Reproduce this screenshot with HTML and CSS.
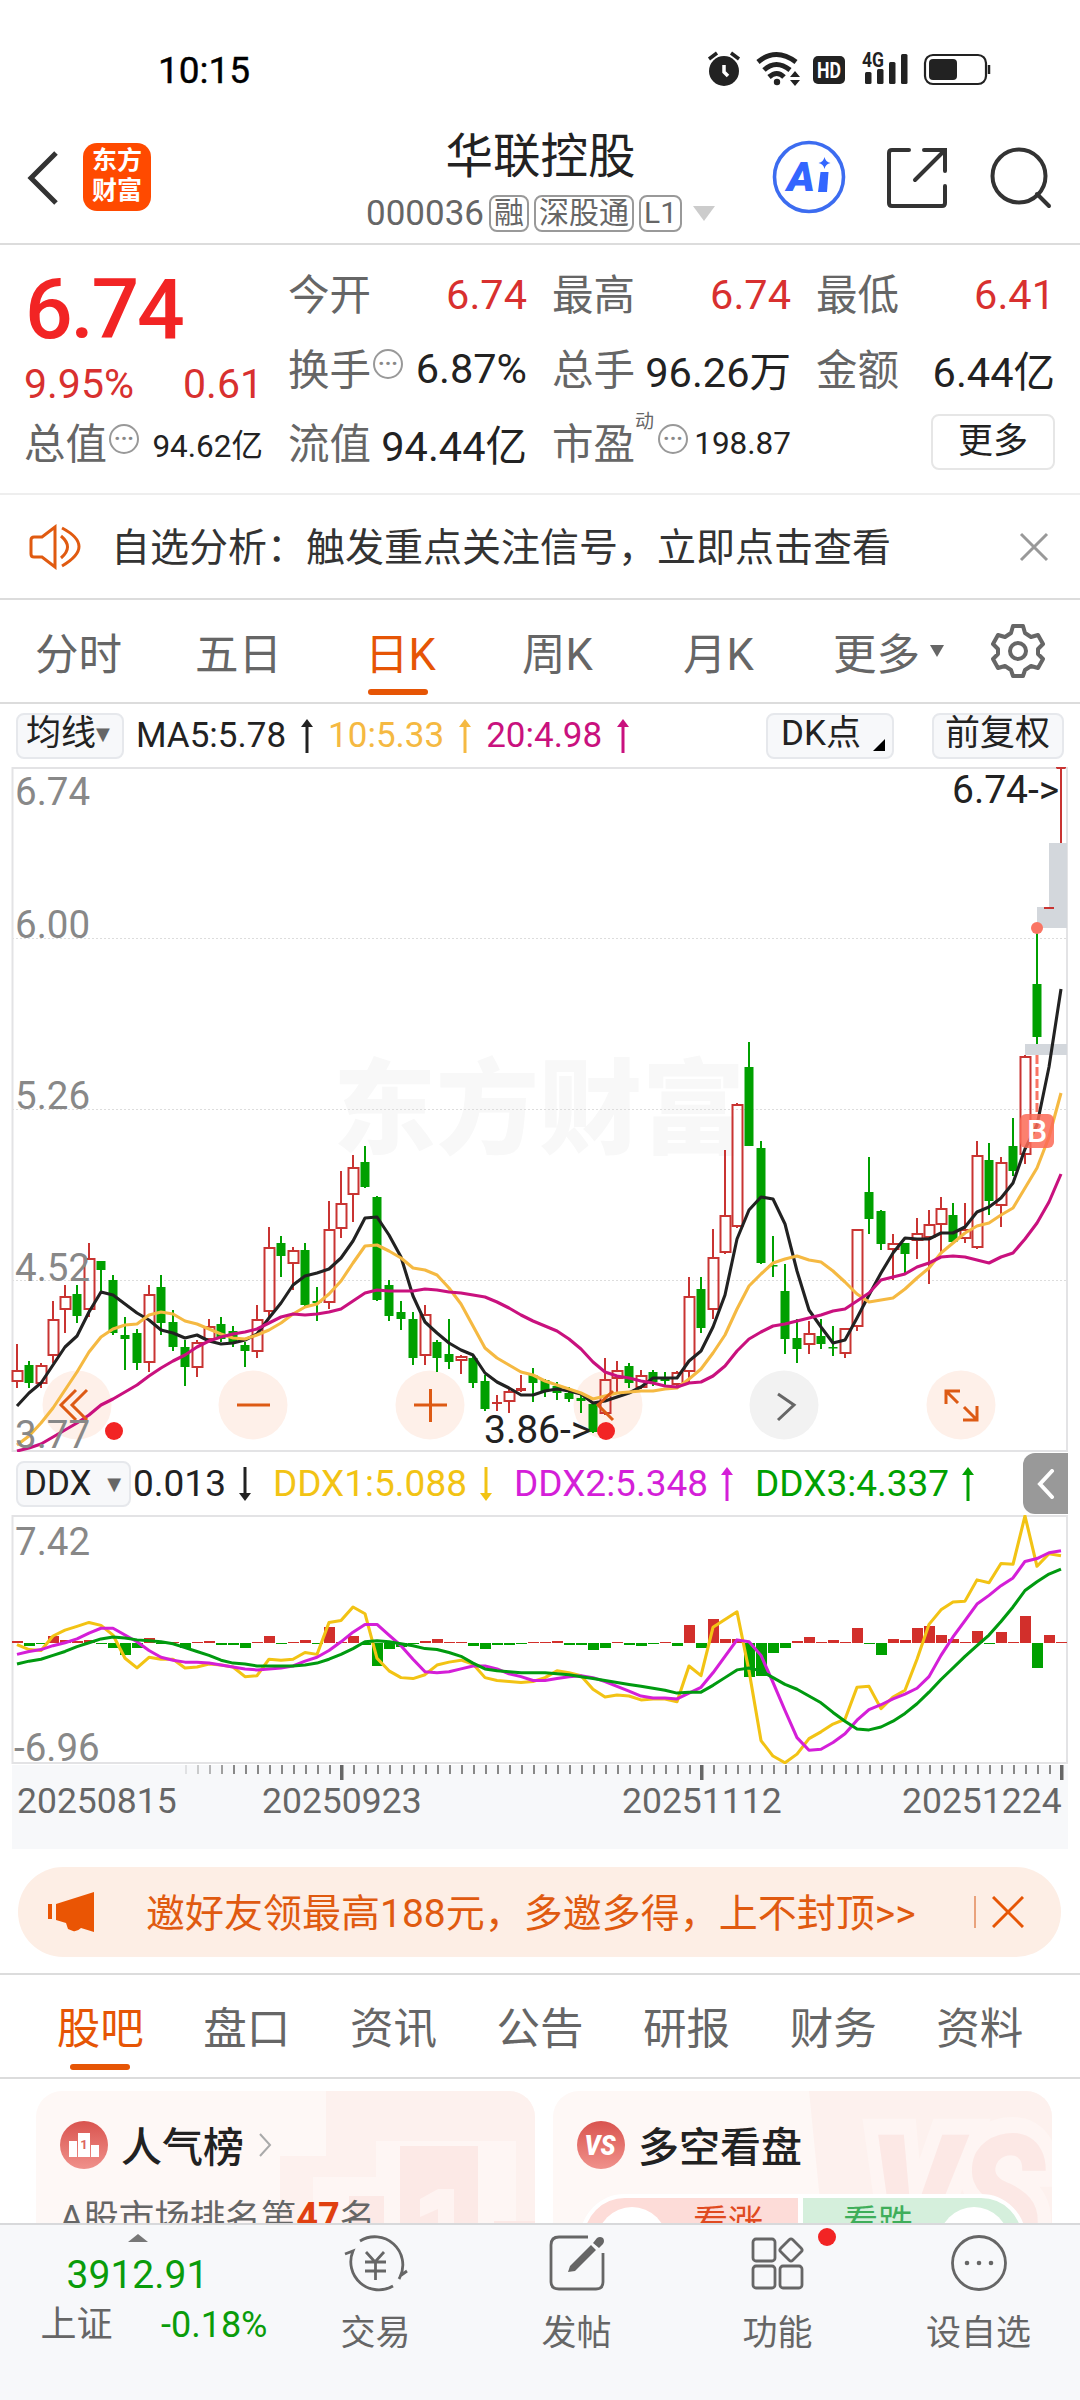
FILE: index.html
```html
<!DOCTYPE html>
<html lang="zh-CN">
<head>
  <meta charset="UTF-8">
  <title>华联控股 000036</title>
  <link rel="stylesheet" href="styles.css">
</head>
<body>
  <div class="status-bar">
    <span class="time">10:15</span>
    <svg class="status-icons" width="290" height="40" viewBox="0 0 290 40">
      <circle cx="24" cy="21" r="15"/>
      <path class="dark" d="M9 9l8-6M31 3l8 6" stroke-width="3.5"/>
      <path class="white" d="M24 15v7l4 4" stroke-width="3.5"/>
      <path class="dark" d="M58 12q18-15 38 0M64 20q12-11 26 0M69 27q8-7 15 0" stroke-width="5"/>
      <circle cx="77" cy="32" r="3.2"/>
      <path d="M90 27l5-6 5 6zM90 30h10l-5 6z"/>
      <rect x="113" y="6" width="32" height="28" rx="5"/>
      <text class="hd" x="129" y="28" text-anchor="middle" textLength="24" lengthAdjust="spacingAndGlyphs">HD</text>
      <text class="g4" x="162" y="17" textLength="22" lengthAdjust="spacingAndGlyphs">4G</text>
      <rect x="165" y="22" width="6.5" height="12" rx="1.5"/>
      <rect x="177" y="19" width="6.5" height="15" rx="1.5"/>
      <rect x="189" y="12" width="6.5" height="22" rx="1.5"/>
      <rect x="201" y="4" width="6.5" height="30" rx="1.5"/>
      <rect class="dark" x="225" y="5" width="61" height="29" rx="8" stroke-width="2.2"/>
      <rect x="229" y="9" width="28" height="21" rx="4"/>
      <path class="dark" d="M289 15v9" stroke-width="2.5"/>
    </svg>
  </div>

  <header class="header">
    <svg class="back" width="34" height="56" viewBox="0 0 34 56"><path d="M30 3L5 28l25 25"/></svg>
    <div class="logo"><span>东方</span><span>财富</span></div>
    <div class="stock">
      <div class="stock-name">华联控股</div>
      <div class="stock-code">
        <span>000036</span><i>融</i><i>深股通</i><i>L1</i>
        <svg width="22" height="15" viewBox="0 0 22 15"><path d="M0 0h22L11 15z" fill="#ccc"/></svg>
      </div>
    </div>
    <svg class="ai" width="74" height="74" viewBox="0 0 74 74">
      <circle cx="37" cy="37" r="34.5" fill="none" stroke="#3c6cf0" stroke-width="3.6"/>
      <text x="15" y="51" textLength="28" lengthAdjust="spacingAndGlyphs">A</text>
      <path d="M48.500 32h8l-1.500 20h-9z"/>
      <path d="M52.500 17q1 5 6 6-5 1-6 6-1-5-6-6 5-1 6-6z"/>
    </svg>
    <svg class="line-icon share" width="60" height="60" viewBox="0 0 60 60"><path d="M22 2H5q-3 0-3 3v50q0 3 3 3h50q3 0 3-3V38M37 2h21v21M28 32L57 3"/></svg>
    <svg class="line-icon" width="62" height="62" viewBox="0 0 62 62"><circle cx="29" cy="29" r="26.500"/><path d="M47 47l12 12"/></svg>
  </header>

  <section class="quote">
    <div class="price">
      <div class="last">6.74</div>
      <div class="change"><span>9.95%</span><span>0.61</span></div>
    </div>
    <div class="cell"><label>今开</label><b class="up">6.74</b></div>
    <div class="cell"><label>最高</label><b class="up">6.74</b></div>
    <div class="cell"><label>最低</label><b class="up">6.41</b></div>
    <div class="cell"><label>换手<span class="info">···</span></label><b>6.87%</b></div>
    <div class="cell"><label>总手</label><b>96.26万</b></div>
    <div class="cell"><label>金额</label><b>6.44亿</b></div>
    <div class="cell"><label>总值<span class="info">···</span></label><b class="small">94.62亿</b></div>
    <div class="cell"><label>流值</label><b>94.44亿</b></div>
    <div class="cell"><label>市盈<sup>动</sup><span class="info">···</span></label><b class="small">198.87</b></div>
    <div class="cell right"><button class="more">更多</button></div>
  </section>

  <section class="notice">
    <svg width="54" height="46" viewBox="0 0 54 46"><path d="M26 3v40L13 33H5q-3 0-3-3V16q0-3 3-3h8zM32 12q13 11 0 22M33 4q34 18 0 38"/></svg>
    <p>自选分析：触发重点关注信号，立即点击查看</p>
    <svg class="close" width="30" height="30" viewBox="0 0 30 30"><path d="M2 2l26 26M28 2L2 28"/></svg>
  </section>

  <nav class="period-tabs">
    <span>分时</span><span>五日</span><span class="active">日K</span><span>周K</span><span>月K</span>
    <span>更多<svg width="14" height="12" viewBox="0 0 14 12"><path d="M0 0h14L7 12z" fill="#666"/></svg></span>
    <svg class="gear" width="54" height="54" viewBox="0 0 54 54">
      <path d="M22 2h10l2 7 6 4 7-2 5 9-5 5v5l5 5-5 9-7-2-6 4-2 6H22l-2-6-6-4-7 2-5-9 5-5v-5l-5-5 5-9 7 2 6-4z"/>
      <circle cx="27" cy="27" r="8"/>
    </svg>
  </nav>

  <div class="legend ma-legend">
    <span class="chip">均线<em class="caret">▼</em></span>
    <span class="ma5">MA5:5.78</span><svg class="arrow ma5"><use href="#up"/></svg>
    <span class="ma10">10:5.33</span><svg class="arrow ma10"><use href="#up"/></svg>
    <span class="ma20">20:4.98</span><svg class="arrow ma20"><use href="#up"/></svg>
    <span class="chip dk">DK点<svg width="12" height="12" viewBox="0 0 12 12"><path d="M12 0v12H0z"/></svg></span>
    <span class="chip">前复权</span>
  </div>

  <svg id="kline" class="chart" width="1080" height="685" viewBox="0 0 1080 685"></svg>

  <div class="legend ddx-legend">
    <span class="chip">DDX<em class="caret">▼</em></span>
    <span>0.013</span><svg class="arrow"><use href="#down"/></svg>
    <span class="ddx1">DDX1:5.088</span><svg class="arrow ddx1"><use href="#down"/></svg>
    <span class="ddx2">DDX2:5.348</span><svg class="arrow ddx2"><use href="#up"/></svg>
    <span class="ddx3">DDX3:4.337</span><svg class="arrow ddx3"><use href="#up"/></svg>
    <div class="drawer"><svg width="18" height="30" viewBox="0 0 18 30"><path d="M15 2L3 15l12 13"/></svg></div>
  </div>

  <svg id="ddx" class="chart" width="1080" height="249" viewBox="0 0 1080 249"></svg>
  <svg id="axis" class="chart" width="1080" height="85" viewBox="0 0 1080 85"></svg>

  <div class="promo">
    <svg width="46" height="40" viewBox="0 0 46 40"><path d="M0 12h4v15H0zM8 12L46 0v40l-13-4q-4 4-8 3l-5-2-2-6-10-3z"/></svg>
    <p>邀好友领最高188元，多邀多得，上不封顶&gt;&gt;</p>
    <svg class="promo-close" width="32" height="32" viewBox="0 0 32 32"><path d="M1 1l30 30M31 1L1 31"/></svg>
  </div>

  <nav class="info-tabs">
    <span class="active">股吧</span><span>盘口</span><span>资讯</span><span>公告</span><span>研报</span><span>财务</span><span>资料</span>
  </nav>

  <section class="cards">
    <div class="card">
      <svg class="card-bg" width="499" height="140" viewBox="0 0 499 140">
        <path d="M290 0h209v140H244V65h46z" fill="#fdf1ee"/>
        <path d="M277 86h63V50h140v90H277z" fill="#fef6f4"/>
        <path d="M364 55h78v85h-78zM313 105h35v35h-35zM458 130h41v10h-41z" fill="#fce9e6"/>
        <path d="M384 108l18-10h16v42h-16v-22l-18 8z" fill="#fef3f1"/>
      </svg>
      <div class="card-title">
        <svg class="badge" width="48" height="48" viewBox="0 0 48 48">
          <defs><linearGradient id="red" x2="0" y2="1"><stop offset="0" stop-color="#d9544f"/><stop offset="1" stop-color="#f0918b"/></linearGradient></defs>
          <circle cx="24" cy="24" r="24" fill="url(#red)"/>
          <path d="M9 20h8v16H9zM18 12h12v24H18zM31 24h8v12h-8z" fill="#fff"/>
          <text class="rank" x="24" y="28" text-anchor="middle">1</text>
        </svg>
        <h3>人气榜</h3>
        <svg width="14" height="24" viewBox="0 0 14 24"><path d="M2 1l10 11L2 23" fill="none" stroke="#aaa" stroke-width="2"/></svg>
      </div>
      <p>A股市场排名第<strong>47</strong>名</p>
    </div>
    <div class="card">
      <svg class="card-bg" width="499" height="180" viewBox="0 0 499 180">
        <path d="M256 0h243v180H274z" fill="#fdf1ee"/>
        <text class="vs-mark" x="316" y="165" textLength="176" lengthAdjust="spacingAndGlyphs">VS</text>
      </svg>
      <div class="card-title">
        <svg class="badge" width="48" height="48" viewBox="0 0 48 48">
          <circle cx="24" cy="24" r="24" fill="url(#red)"/>
          <text class="vs" x="23" y="34" text-anchor="middle" textLength="31" lengthAdjust="spacingAndGlyphs">VS</text>
        </svg>
        <h3>多空看盘</h3>
      </div>
      <div class="vote">
        <div class="bull"><i></i>看涨</div>
        <div class="bear">看跌<i></i></div>
      </div>
    </div>
  </section>

  <footer class="tabbar">
    <div class="index">
      <svg width="20" height="8" viewBox="0 0 20 8"><path d="M10 0l10 8H0z" fill="#777"/></svg>
      <div class="index-value">3912.91</div>
      <div class="index-row"><span>上证</span><span class="down">-0.18%</span></div>
    </div>
    <div class="item">
      <svg width="66" height="60" viewBox="0 0 66 60">
        <path d="M17 8A28 28 0 0 1 57 44l-1 2M2 21l8-3A28 28 0 0 0 50 53M57 43l7-5M23 19l9 10 9-10M22 29h21M22 38h21M32.500 29v18"/>
      </svg>
      <span>交易</span>
    </div>
    <div class="item">
      <svg width="58" height="60" viewBox="0 0 58 60">
        <path d="M40 4H11q-8 0-8 8v37q0 7 8 7h37q7 0 7-7V20"/>
        <path class="fill" d="M20 39l2-6 21-21 5 5-21 21zM45 10l4-5q3-2 6 0 2 3 0 6l-4 4z"/>
      </svg>
      <span>发帖</span>
    </div>
    <div class="item">
      <svg width="54" height="60" viewBox="0 0 54 60">
        <rect x="2" y="6" width="22" height="22" rx="3"/><rect x="2" y="33" width="22" height="22" rx="3"/><rect x="29" y="33" width="22" height="22" rx="3"/>
        <rect x="31.500" y="8.500" width="17" height="17" rx="2.500" transform="rotate(45 40 17)"/>
      </svg>
      <span>功能</span>
      <i class="dot"></i>
    </div>
    <div class="item">
      <svg width="60" height="60" viewBox="0 0 60 60">
        <circle cx="30" cy="30" r="26.500"/><g class="fill"><circle cx="18" cy="30" r="2.300"/><circle cx="30" cy="30" r="2.300"/><circle cx="42" cy="30" r="2.300"/></g>
      </svg>
      <span>设自选</span>
    </div>
  </footer>

  <svg width="0" height="0" class="defs">
    <symbol id="up" viewBox="0 0 12 34"><path d="M6 0l6 8H7.500v26h-3V8H0z"/></symbol>
    <symbol id="down" viewBox="0 0 12 34"><path d="M6 34l6-8H7.500V0h-3v26H0z"/></symbol>
  </svg>

  <script src="chart.js"></script>
</body>
</html>
```

FILE: styles.css
```css
* {
  box-sizing: border-box;
}

body {
  margin: 0;
  width: 1080px;
  height: 2400px;
  overflow: hidden;
  position: relative;
  background: #fff;
  color: #222;
  font-family: Roboto, "Noto Sans CJK SC", sans-serif;
  font-size: 36px;
}

p, h3 {
  margin: 0;
}

i, em {
  font-style: normal;
}

svg {
  display: block;
  flex: none;
}

.defs {
  position: absolute;
}

/* status bar */
.status-bar {
  height: 120px;
  padding: 20px 91px 0 158px;
  display: flex;
  align-items: center;
  justify-content: space-between;
}

.time {
  font-size: 37px;
  color: #000;
  -webkit-text-stroke: 0.4px #000;
}

.status-icons {
  fill: #222;
  overflow: visible;
  margin-right: -1px;
}

.status-icons .dark {
  fill: none;
  stroke: #222;
}

.status-icons .white {
  fill: none;
  stroke: #fff;
}

.status-icons .hd {
  fill: #fff;
  font-size: 22px;
  font-weight: 700;
}

.g4 {
  font-size: 21px;
  font-weight: 700;
}

/* header */
.header {
  height: 125px;
  padding: 0 28px 0 26px;
  display: flex;
  align-items: center;
  border-bottom: 2px solid #dcdcdc;
}

.back {
  margin-top: -8px;
}

.back path {
  fill: none;
  stroke: #333;
  stroke-width: 5;
}

.logo {
  width: 68px;
  height: 68px;
  margin: -9px 0 0 23px;
  padding-bottom: 2px;
  border-radius: 14px;
  background: #ff4a00;
  color: #fff;
  font-size: 25px;
  font-weight: 700;
  line-height: 30px;
  display: flex;
  flex-direction: column;
  align-items: center;
  justify-content: center;
}

.stock {
  flex: 1;
  padding-left: 158px;
  display: flex;
  flex-direction: column;
  align-items: center;
}

.stock-name {
  font-size: 47.500px;
  line-height: 60px;
  margin-top: 1px;
}

.stock-code {
  display: flex;
  align-items: center;
  height: 48px;
  color: #666;
  font-size: 35px;
  margin-top: 2px;
}

.stock-code i {
  height: 37px;
  line-height: 32px;
  margin-left: 5px;
  padding: 0 3px;
  border: 2px solid #999;
  border-radius: 8px;
  font-size: 30px;
}

.stock-code svg {
  margin-left: 11px;
}

.ai {
  margin: -9px 41px 0 0;
  fill: #3366ff;
}

.ai text {
  font-size: 41px;
  font-weight: 900;
  font-style: italic;
}

.line-icon {
  fill: none;
  stroke: #333;
  stroke-width: 4;
  stroke-linecap: round;
  margin-top: -8px;
}

.share {
  margin-right: 43px;
}

/* quote */
.quote {
  height: 250px;
  padding: 12px 25px 0;
  display: grid;
  grid-template-columns: repeat(4, 238px);
  grid-auto-rows: 74.500px;
  column-gap: 26px;
  border-bottom: 2px solid #eee;
}

.price {
  grid-row: span 2;
  color: #d8302f;
}

.last {
  color: #f22424;
  font-size: 84px;
  font-weight: 500;
  line-height: 105px;
  letter-spacing: -2.300px;
}

.change {
  display: flex;
  justify-content: space-between;
  margin-left: -1px;
  font-size: 41px;
  line-height: 44px;
}

.cell {
  display: flex;
  align-items: center;
  justify-content: space-between;
  white-space: nowrap;
}

.cell label {
  display: flex;
  align-items: center;
  margin: -4px 0 0 -1px;
  color: #666;
  font-size: 41.500px;
}

.cell b {
  font-weight: 400;
  font-size: 41.500px;
}

.cell .up {
  color: #d8302f;
}

.cell .small {
  font-size: 31.500px;
}

.cell sup {
  font-size: 19px;
  line-height: 20px;
  margin-bottom: 38px;
}

.info {
  width: 30px;
  height: 30px;
  margin: -5px 0 0 2px;
  border: 2px solid #999;
  border-radius: 50%;
  color: #888;
  font-size: 22px;
  font-weight: 700;
  line-height: 26px;
  text-align: center;
}

.cell sup + .info {
  margin-left: 4px;
}

.right {
  justify-content: flex-end;
}

.more {
  width: 124px;
  height: 56px;
  margin-top: -3px;
  padding: 0;
  border: 2px solid #e6e6e6;
  border-radius: 8px;
  background: #fff;
  color: #222;
  font: inherit;
  font-size: 35px;
  line-height: 48px;
}

/* notice */
.notice {
  height: 105px;
  padding: 0 31px 0 29px;
  display: flex;
  align-items: center;
  border-bottom: 2px solid #dcdcdc;
}

.notice svg {
  fill: none;
  stroke: #e05a10;
  stroke-width: 3;
}

.notice p {
  flex: 1;
  margin: -5px 0 0 28px;
  font-size: 39px;
  color: #333;
}

.notice .close {
  stroke: #999;
}

/* K line period */
.period-tabs {
  height: 104px;
  padding-left: 35px;
  display: grid;
  grid-template-columns: 160px 170px 157px 161px 150px 159px 60px;
  align-items: center;
  border-bottom: 2px solid #dcdcdc;
  color: #666;
  font-size: 43.500px;
}

.period-tabs span {
  display: flex;
  align-items: center;
  position: relative;
  height: 96px;
}

.period-tabs span svg {
  margin-left: 10px;
}

.active {
  color: #e65505;
}

.active::after {
  content: "";
  position: absolute;
  bottom: 2px;
  width: 60px;
  height: 6px;
  border-radius: 3px;
  background: #e65505;
}

.period-tabs .active::after {
  left: 3px;
  bottom: 4px;
}

.gear {
  fill: none;
  stroke: #666;
  stroke-width: 4;
  stroke-linejoin: round;
  margin: 0 0 0 -1px;
}

/* indicator legends */
.legend {
  height: 63px;
  display: flex;
  align-items: center;
  white-space: nowrap;
  font-size: 35px;
}

.chip {
  height: 46px;
  padding: 0 8px;
  display: flex;
  align-items: center;
  border: 2px solid #e6e8ec;
  border-radius: 8px;
  background: #f7f8fa;
}

.caret {
  color: #666;
  font-size: 18px;
  font-family: "DejaVu Sans", sans-serif;
}

.arrow {
  width: 12px;
  height: 34px;
  fill: currentColor;
}

.ma5 { color: #222; }
.ma10 { color: #f5b942; }
.ma20 { color: #c9117e; }
.ddx1 { color: #f2c314; }
.ddx2 { color: #d41fd8; }
.ddx3 { color: #00a000; }

.ma-legend {
  padding-left: 16px;
}

.ma-legend > span:not(.chip) {
  margin-left: 15px;
}

.ma-legend > span.ma5:not(.chip) {
  margin-left: 12px;
}

.ma-legend .arrow {
  margin-left: 15px;
}

.ma-legend .chip {
  line-height: 40px;
  padding-bottom: 4px;
}

.ma-legend .chip:first-child {
  width: 108px;
}

.ma-legend .chip:last-child {
  width: 132px;
  padding-left: 11px;
  margin: 0 16px 0 38px;
}

.ma-legend .dk {
  width: 128px;
  margin-left: auto;
  padding-left: 13px;
}

.dk svg {
  margin: 22px 0 0 12px;
}

.ddx-legend {
  padding-left: 16px;
  font-size: 37px;
}

.ddx-legend .chip {
  width: 115px;
  font-size: 35px;
  padding-left: 6px;
  padding-right: 8px;
  justify-content: space-between;
}

.ddx-legend .chip + span {
  margin-left: 2px;
}

.ddx-legend .arrow {
  margin: 0 22px 0 13px;
}

.drawer {
  width: 45px;
  height: 61px;
  margin-left: auto;
  margin-right: 12px;
  border-radius: 12px 0 0 12px;
  background: #999;
  display: flex;
  align-items: center;
  justify-content: center;
}

.drawer path {
  fill: none;
  stroke: #fff;
  stroke-width: 4;
  stroke-linecap: round;
}

/* charts */
.frame {
  fill: none;
  stroke: #e3e3e5;
  stroke-width: 2;
}

.grid {
  stroke: #ddd;
  stroke-dasharray: 2 2;
}

.scale {
  font-size: 38.500px;
  fill: #888;
}

.mark {
  font-size: 39px;
  fill: #222;
}

.date {
  font-size: 35.500px;
  fill: #666;
}

.watermark {
  font-family: "Noto Sans CJK SC", sans-serif;
  font-size: 103px;
  font-weight: 900;
  fill: #f8f8f8;
}

.curve {
  fill: none;
  stroke-width: 3.100;
  stroke-linejoin: round;
}

.ctl-icon {
  fill: none;
  stroke-width: 3;
}

/* promo */
.promo {
  width: 1043px;
  height: 90px;
  margin: 18px 0 0 18px;
  padding: 0 37px 0 30px;
  display: flex;
  align-items: center;
  border-radius: 45px;
  background: #fdeee5;
  color: #e05a10;
}

.promo > svg:first-child {
  fill: #ea5504;
}

.promo p {
  flex: 1;
  margin: -5px 0 0 52px;
  font-size: 39px;
}

.promo-close {
  box-sizing: content-box;
  border-left: 2px solid #e9a27c;
  padding-left: 16px;
  stroke: #e65505;
  stroke-width: 3;
}

/* info tabs */
.info-tabs {
  height: 106px;
  margin-top: 16px;
  padding: 0 27px;
  display: flex;
  border-top: 2px solid #dcdcdc;
  border-bottom: 2px solid #dcdcdc;
  color: #666;
  font-size: 43.500px;
  line-height: 110px;
}

.info-tabs span {
  flex: 1;
  display: flex;
  justify-content: center;
  position: relative;
}

.info-tabs .active::after {
  bottom: 7px;
}

/* cards */
.cards {
  height: 150px;
  padding: 12px 28px 0 36px;
  display: flex;
  gap: 18px;
  overflow: hidden;
}

.card {
  width: 499px;
  height: 240px;
  padding: 29px 24px;
  position: relative;
  overflow: hidden;
  border-radius: 26px;
  background: #fef8f6;
}

.card-bg {
  position: absolute;
  top: 0;
  left: 0;
}

.vs-mark {
  font-size: 170px;
  font-weight: 900;
  font-style: italic;
  fill: #fce8e5;
  stroke: #fef5f3;
  stroke-width: 32;
  paint-order: stroke;
}

.card-title {
  display: flex;
  align-items: center;
  height: 50px;
  position: relative;
}

.card-title h3 {
  margin: -2px 14px 0 13px;
  font-size: 41px;
  font-weight: 500;
  font-family: "Noto Sans CJK SC", sans-serif;
}

.rank {
  font-size: 13px;
  font-weight: 700;
  fill: #dd6560;
}

.vs {
  font-size: 27px;
  font-weight: 900;
  font-style: italic;
  fill: #fff;
}

.card p {
  position: relative;
  margin-top: 19px;
  font-size: 35.500px;
  color: #666;
}

.card strong {
  color: #e04010;
  font-size: 38px;
}

.vote {
  position: relative;
  width: 446px;
  height: 90px;
  margin: 24px 0 0 3px;
  display: flex;
  gap: 5px;
  border: 4px solid #fff;
  border-radius: 45px;
  background: #fff;
  overflow: hidden;
  font-size: 35px;
  line-height: 52px;
}

.vote div {
  flex: 1;
  display: flex;
  justify-content: space-between;
}

.vote i {
  width: 70px;
  height: 70px;
  margin: 9px 13px;
  border-radius: 50%;
  background: #fff;
}

.bull {
  background: #fddcd8;
  color: #e04a20;
  padding-right: 35px;
}

.bear {
  background: #d5efdc;
  color: #3fae5a;
  padding-left: 40px;
}

/* bottom bar */
.tabbar {
  position: absolute;
  top: 2223px;
  left: 0;
  width: 1080px;
  height: 177px;
  display: flex;
  border-top: 2px solid #d8d9db;
  background: #f7f8fa;
}

.index {
  width: 275px;
  padding-top: 9px;
  display: flex;
  flex-direction: column;
  align-items: center;
  color: #0a9c0a;
}

.index-value {
  margin-top: 10px;
  font-size: 39px;
  line-height: 46px;
}

.index-row {
  width: 227px;
  margin: 6px 0 0 33px;
  display: flex;
  justify-content: space-between;
  font-size: 36px;
  line-height: 42px;
}

.index-row span:first-child {
  color: #666;
}

.item {
  width: 201px;
  padding-top: 8px;
  display: flex;
  flex-direction: column;
  align-items: center;
  position: relative;
  color: #666;
  font-size: 35px;
}

.item svg {
  fill: none;
  stroke: #666;
  stroke-width: 2.800;
}

.item .fill {
  fill: #666;
  stroke: none;
}

.item span {
  margin-top: 16px;
  line-height: 50px;
}

.dot {
  position: absolute;
  top: 3px;
  left: 141px;
  width: 18px;
  height: 18px;
  border-radius: 50%;
  background: #f22424;
}
```

FILE: chart.js
```javascript
const RED = '#c93432';
const GREEN = '#00a000';
const X0 = 17;
const STEP = 12;

// [up?, high, top, bottom, low]
const candles = [
  [1,577,603,615,621],[0,594,598,616,621],[1,596,598,617,621],[1,534,552,589,596],[1,518,529,543,566],
  [0,518,527,549,556],[1,476,491,543,550],[0,494,494,503,525],[0,508,513,566,568],[0,550,568,572,603],
  [0,562,566,596,603],[1,518,527,596,605],[0,508,520,556,568],[0,543,555,580,584],[0,573,580,600,619],
  [1,573,575,601,610],[1,552,559,573,575],[0,550,557,572,575],[0,559,564,576,580],[0,575,578,584,600],
  [1,538,552,585,591],[1,460,480,545,550],[0,469,476,489,510],[1,480,483,497,523],[0,476,483,538,540],
  [0,520,534,536,554],[1,434,462,536,542],[1,404,436,462,471],[1,388,400,428,455],[0,379,395,420,421],
  [0,429,430,533,534],[0,513,518,549,554],[0,534,545,552,563],[0,545,552,591,598],[1,538,547,589,598],
  [0,573,575,591,605],[0,552,587,595,602],[1,588,589,594,607],[0,588,591,616,621],[0,608,614,642,644],
  [1,628,635,637,644],[1,621,624,635,646],[1,608,621,624,625],[0,601,608,616,635],[0,612,613,624,630],
  [0,615,619,626,633],[0,620,626,632,635],[0,628,631,634,646],[0,636,637,665,666],[1,591,612,647,648],
  [1,594,603,612,626],[0,596,599,616,621],[1,603,608,621,622],[0,603,605,615,619],[0,605,612,614,619],
  [1,604,605,618,619],[1,510,529,605,616],[0,510,522,561,566],[1,462,490,543,552],[1,383,448,486,487],
  [1,336,337,460,461],[0,275,300,379,379],[0,374,381,496,497],[0,469,498,499,510],[0,497,524,572,587],
  [0,552,571,582,596],[1,554,566,578,587],[0,552,569,577,582],[0,559,580,581,589],[1,561,561,587,591],
  [1,462,462,560,564],[0,390,425,452,467],[0,443,444,477,483],[1,467,476,483,513],[0,476,476,487,506],
  [1,451,466,474,492],[1,443,457,471,517],[1,430,441,458,486],[0,436,448,475,476],[1,436,462,472,476],
  [1,374,388,481,482],[0,376,393,434,448],[1,390,395,439,460],[0,351,379,404,409],[1,288,289,388,397],
  [0,163,217,270,277],[1,141,140,142,141],[1,0,0,0,76]
];

const ma5 = [639,626,616,598,580,569,545,525,528,537,546,553,563,566,571,568,574,577,576,573,567,551,536,518,509,506,502,491,474,451,450,468,490,529,555,566,576,583,588,606,615,621,628,628,624,622,624,627,636,634,630,626,620,611,611,611,594,584,560,528,472,443,430,432,457,504,543,560,576,573,551,528,506,486,471,472,472,466,466,460,445,440,431,416,382,358,300,222];
const ma10 = [678,669,656,641,623,605,585,570,562,558,557,548,545,547,554,557,562,567,571,572,568,563,556,547,540,537,527,514,496,479,478,484,491,501,503,508,521,537,559,581,591,598,605,608,614,618,622,626,632,629,626,625,624,624,622,621,612,602,586,568,542,519,507,496,492,489,493,495,504,515,527,535,533,531,522,511,501,486,476,466,459,456,448,441,421,401,370,326];
const ma20 = [684,681,677,670,663,656,648,638,632,625,618,609,601,594,588,580,574,570,567,565,562,556,550,547,548,547,545,542,534,526,523,524,524,524,522,523,525,526,528,530,535,541,548,554,559,564,572,582,595,605,609,611,614,616,619,620,616,615,609,599,584,572,565,559,557,554,551,548,544,542,534,526,513,510,507,500,496,490,489,490,493,496,490,486,472,456,435,407];

const bars = [2,-3,-1,7,3,2,3,-1,-5,-12,-5,5,-1,1,-5,1,2,-2,-2,-5,1,7,-1,1,3,-1,16,1,7,-2,-23,-6,-4,-1,2,4,1,1,-3,-6,-2,-2,-1,1,1,2,-2,-2,-7,-5,1,-2,-3,-1,1,-3,18,-5,24,4,4,-34,-33,-10,-5,2,6,1,3,1,15,-1,-12,4,3,15,17,8,4,1,12,-1,11,1,27,-25,8,1];
const ddx1 = [134,139,140,125,119,115,111,114,124,148,158,147,149,149,158,157,154,155,157,167,166,149,150,149,142,144,111,109,95,102,148,161,168,169,165,155,152,150,154,168,171,172,173,172,168,161,163,166,180,188,186,187,191,190,190,193,156,166,116,108,100,161,233,249,256,247,231,224,216,211,178,177,200,188,181,149,113,98,90,89,67,70,50,51,1,53,40,42];
const ddx2 = [144,141,139,135,132,128,122,117,117,124,131,140,147,150,152,152,153,155,157,159,160,159,158,156,151,147,140,131,121,113,113,124,135,149,162,163,162,159,156,156,159,164,167,171,171,169,167,166,168,172,177,182,187,189,189,190,184,178,163,146,129,131,145,173,202,230,243,242,235,226,212,201,196,190,185,179,167,145,126,109,92,83,73,65,48,45,39,37];
const ddx3 = [154,151,149,145,141,136,132,128,126,127,129,130,131,133,137,141,145,150,153,154,156,156,156,156,155,153,149,144,138,131,130,131,133,135,138,139,142,146,153,159,161,162,163,163,163,164,165,167,169,171,173,175,177,179,181,184,183,183,176,168,160,158,161,168,175,180,187,194,204,213,221,222,219,213,205,195,183,170,158,146,135,124,110,95,78,69,61,56];

// [center x, icon path, grey?]
const buttons = [
  [77, 'M76 623L61 638L76 653M87 623L72 638L87 653'],
  [253, 'M237 638H270'],
  [430, 'M414 638H447M430.500 622V655'],
  [608, 'M613 624L598 638L613 653'],
  [784, 'M778 627L794 638L778 653', true],
  [961, 'M946 637V624H960M946 624L958 636M964 640L977 653M977 639V653H963']
];

const px = i => X0 + STEP * i;

function curve(values, color) {
  const points = values.map((v, i) => `${px(i)},${v}`).join(' ');
  return `<polyline class="curve" points="${points}" stroke="${color}"/>`;
}

function candle([up, high, top, bottom, low], i) {
  const x = px(i);
  const h = bottom - top;
  if (!up) {
    return `<path d="M${x} ${high}V${low}" stroke="${GREEN}" stroke-width="2"/>
      <rect x="${x - 4.5}" y="${top}" width="9" height="${Math.max(h, 1.5)}" fill="${GREEN}"/>`;
  }
  const wick = `<path d="M${x} ${high}V${top}M${x} ${bottom}V${low}" stroke="${RED}" stroke-width="2"/>`;
  if (h < 4) {
    return wick + `<rect x="${x - 5}" y="${top}" width="10" height="${Math.max(h, 1.5)}" fill="${RED}"/>`;
  }
  return wick + `<rect x="${x - 4.5}" y="${top + 1}" width="10" height="${h - 2}" fill="none" stroke="${RED}" stroke-width="2"/>`;
}

function drawKline() {
  let s = '<text class="watermark" x="333" y="379">东方财富</text>';
  s += '<path class="grid" d="M12 171.500H1067M12 342.500H1067M12 513.500H1067"/>';
  s += '<rect class="frame" x="12.500" y="1" width="1054.500" height="683"/>';
  s += buttons.map(([x, , grey]) => `<circle cx="${x}" cy="638" r="34.5" fill="${grey ? '#f2f2f2' : '#fef0e9'}"/>`).join('');
  s += '<path d="M1049 76h18v85h-30v-21h12zM1025 277h42v11h-42z" fill="#d3d7dc"/>';
  s += candles.map(candle).join('');
  s += `<path d="M1057 1h8" stroke="${RED}" stroke-width="2"/>`;
  s += '<circle cx="1037" cy="161" r="6" fill="#fa7564"/>';
  s += '<path d="M1037 288V348" stroke="#fa7564" stroke-width="3" stroke-dasharray="9 3"/>';
  s += curve(ma5, '#222') + curve(ma10, '#f5b942') + curve(ma20, '#c9117e');
  s += '<rect x="1020" y="347" width="34" height="34" rx="6" fill="#fb6a56" opacity=".85"/>';
  s += '<text x="1037" y="375" text-anchor="middle" font-size="32" font-weight="500" fill="#fff">B</text>';
  s += buttons.map(([, d, grey]) => `<path class="ctl-icon" d="${d}" stroke="${grey ? '#666' : '#dd5a14'}"/>`).join('');

  s += [['6.74', 38], ['6.00', 171], ['5.26', 342], ['4.52', 514], ['3.77', 681]]
    .map(([t, y]) => `<text class="scale" x="15" y="${y}">${t}</text>`).join('');
  s += '<text class="mark" x="952" y="36">6.74-&gt;</text>';
  s += '<text class="mark" x="484" y="676">3.86-&gt;</text>';
  s += '<circle cx="114" cy="664" r="9" fill="#f22424"/><circle cx="606" cy="664" r="9" fill="#f22424"/>';
  document.getElementById('kline').innerHTML = s;
}

function drawDdx() {
  let s = '<rect class="frame" x="12.500" y="1" width="1054.500" height="247"/>';
  s += bars.map((v, i) => {
    const y = v > 0 ? 128 - v : 128;
    return `<rect x="${px(i) - 5}" y="${y}" width="11" height="${Math.abs(v)}" fill="${v > 0 ? '#d22f2b' : GREEN}"/>`;
  }).join('');
  s += '<g transform="scale(1 .968)">' + curve(ddx1, '#f2c314') + curve(ddx2, '#d41fd8') + curve(ddx3, '#009a10') + '</g>';
  s += '<text class="scale" x="15" y="40">7.42</text><text class="scale" x="14" y="246">-6.96</text>';
  document.getElementById('ddx').innerHTML = s;
}

function drawAxis() {
  let s = '<rect x="12" y="1" width="1056" height="84" fill="#f7f8fa"/>';
  for (let i = 14; i < 88; i++) {
    const major = i === 27 || i === 57 || i === 87;
    const opacity = Math.min(1, (i - 13) / 5);
    s += `<rect x="${px(i) - (major ? 1 : 0)}" y="1" width="${major ? 3.5 : 2}" height="${major ? 15 : 9}" fill="${major ? '#666' : '#888'}" opacity="${opacity}"/>`;
  }
  s += [['20250815', 17], ['20250923', 262], ['20251112', 622], ['20251224', 902]]
    .map(([t, x]) => `<text class="date" x="${x}" y="49">${t}</text>`).join('');
  document.getElementById('axis').innerHTML = s;
}

drawKline();
drawDdx();
drawAxis();
```
